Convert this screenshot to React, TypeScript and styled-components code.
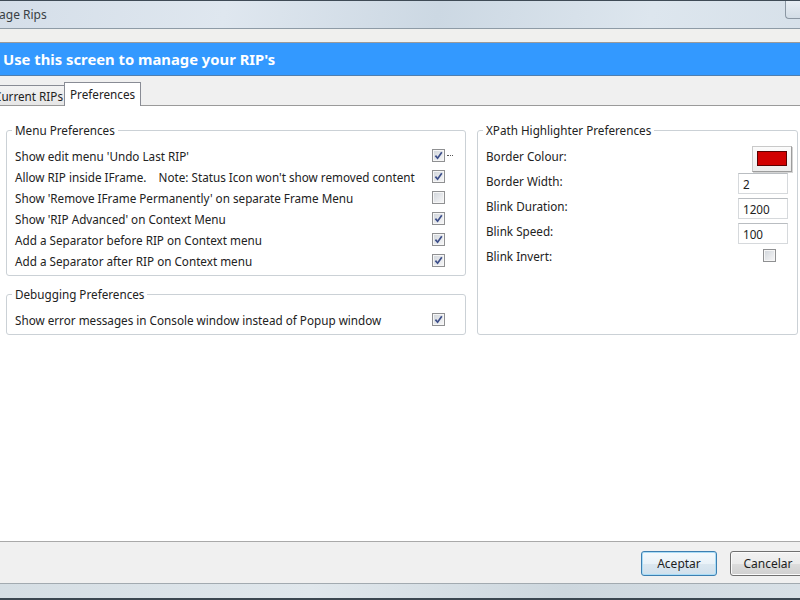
import React from 'react'
import styled, { createGlobalStyle, css } from 'styled-components'

const GlobalStyle = createGlobalStyle`
  * {
    box-sizing: border-box;
  }
  html, body {
    margin: 0;
    padding: 0;
    background: #f0f0f0;
  }
  body {
    font-family: 'Noto Sans', 'Open Sans', sans-serif;
    font-size: 11.7px;
    color: #222;
  }
`

const Screen = styled.div`
  width: 800px;
  height: 600px;
  overflow: hidden;
  background: #f0f0f0;
`

// the dialog is wider than the screenshot, it is cut on both sides
const Window = styled.div`
  margin-left: -30px;
  width: 850px;
  height: 600px;
  display: flex;
  flex-direction: column;
`

const TitleBar = styled.div`
  height: 29px;
  flex: none;
  display: flex;
  align-items: flex-start;
  border-top: 1px solid #3f4b56;
  border-bottom: 1px solid #8e9ba6;
  background: linear-gradient(100deg, #d3dde8 0%, #dfe7ef 30%, #ccd8e3 55%, #dde6ee 80%, #d6e0e9 100%);
`

const Title = styled.span`
  padding-left: 4px;
  line-height: 27px;
  font-size: 12px;
  color: #3a3f44;
`

const CloseButton = styled.div`
  margin-left: auto;
  width: 35px;
  height: 18px;
  border-left: 1px solid #8b97a3;
  border-bottom: 1px solid #8b97a3;
  border-bottom-left-radius: 4px;
  background: linear-gradient(#e8eef4, #d3dde6);
`

const MenuStrip = styled.div`
  height: 14px;
  flex: none;
  background: #f0f0ee;
  border-bottom: 1px solid #9a9a9a;
`

const Banner = styled.div`
  height: 33px;
  flex: none;
  display: flex;
  align-items: center;
  padding-left: 33px;
  background: #3399ff;
  border-bottom: 1px solid #4f7fb0;
  color: #ffffff;
  font-size: 14.8px;
  font-weight: 700;
`

const TabStrip = styled.div`
  height: 30px;
  flex: none;
  display: flex;
  align-items: flex-end;
  padding-left: 20px;
  border-bottom: 1px solid #9a9a9a;
`

const Tab = styled.div<{ active?: boolean }>`
  display: flex;
  align-items: center;
  border: 1px solid #898c95;
  border-bottom: none;
  font-size: 11.7px;
  ${({ active }) =>
    active
      ? css`
          height: 24px;
          margin-bottom: -1px;
          padding: 0 5px 2px 5px;
          background: #ffffff;
        `
      : css`
          height: 20px;
          padding: 0 1px 0 3px;
          border-right: none;
          background: linear-gradient(#f3f3f3, #e6e6e6);
        `}
`

const Panel = styled.div`
  flex: 1;
  background: #ffffff;
  padding: 16px 0 0 36px;
`

const Columns = styled.div`
  display: grid;
  grid-template-columns: 460px 321px;
  column-gap: 11px;
  align-items: stretch;
`

const Stack = styled.div`
  display: flex;
  flex-direction: column;
  gap: 10px;
`

const Group = styled.fieldset<{ padTop: number; padRight: number }>`
  margin: 0;
  min-width: 0;
  border: 1px solid #cbd1d6;
  border-radius: 3px;
  padding: ${({ padTop }) => padTop}px ${({ padRight }) => padRight}px 4px 8px;
`

const GroupTitle = styled.legend`
  padding: 0 3px;
  margin-left: -3px;
  line-height: 16px;
  font-size: 11.7px;
  color: #222;
`

const OptionRow = styled.div`
  height: 21px;
  display: flex;
  align-items: center;
  justify-content: space-between;
  white-space: nowrap;
`

const FieldRow = styled.div`
  height: 25px;
  display: flex;
  align-items: center;
  justify-content: space-between;
`

const Box = styled.span<{ focused?: boolean; right?: number }>`
  position: relative;
  flex: none;
  width: 13px;
  height: 13px;
  margin-right: ${({ right }) => right ?? 0}px;
  border: 1px solid #8f9092;
  background: linear-gradient(135deg, #cfd4da 0%, #e6e8eb 55%, #f7f7f8 100%);
  box-shadow: inset 0 0 0 1px #f6f6f6;
  display: flex;
  align-items: center;
  justify-content: center;
  ${({ focused }) =>
    focused &&
    css`
      &::after {
        content: '';
        position: absolute;
        left: 14px;
        top: 5px;
        width: 6px;
        border-top: 1px dotted #555;
      }
    `}
`

const Check = () => (
  <svg width="9" height="9" viewBox="0 0 9 9">
    <path d="M1.4 4.6 L3.6 7.2 L7.8 1.2" fill="none" stroke="#3d4f8a" strokeWidth="1.7" />
  </svg>
)

function CheckBox({ checked, focused, right }: { checked?: boolean; focused?: boolean; right?: number }) {
  return (
    <Box focused={focused} right={right}>
      {checked && <Check />}
    </Box>
  )
}

const NumberField = styled.input`
  width: 50px;
  height: 21px;
  margin: 6px 4px 0 0;
  padding: 0 4px;
  border: 1px solid #d6d9dc;
  border-top-color: #b9bdc1;
  background: #ffffff;
  font-family: inherit;
  font-size: 11.7px;
  color: #222;
  outline: none;
`

const ColourButton = styled.div`
  width: 40px;
  height: 26px;
  margin-top: 6px;
  display: flex;
  align-items: center;
  justify-content: center;
  border: 1px solid #c9c9c9;
  border-right-color: #9d9d9d;
  border-bottom-color: #9d9d9d;
  background: linear-gradient(#fbfbfb, #ececec);
  box-shadow: 1px 1px 0 #d4d4d4;
`

const Swatch = styled.span<{ colour: string }>`
  width: 30px;
  height: 15px;
  background: ${({ colour }) => colour};
  border: 1px solid #5a0000;
`

const Footer = styled.div`
  height: 42px;
  flex: none;
  display: flex;
  align-items: flex-start;
  justify-content: flex-end;
  gap: 13px;
  padding: 9px 14px 0 0;
  border-top: 1px solid #a9a9a9;
  background: #f0f0f0;
`

const DialogButton = styled.button<{ primary?: boolean }>`
  width: 76px;
  height: 25px;
  padding: 0;
  border-radius: 3px;
  font-family: inherit;
  font-size: 12px;
  color: #1e1e1e;
  ${({ primary }) =>
    primary
      ? css`
          border: 1px solid #3c7fb1;
          background: linear-gradient(#f4f9fc 0%, #e9f2f8 50%, #dbe7f0 51%, #d0e0ec 100%);
          box-shadow: inset 0 0 0 1px #a9dcf6;
        `
      : css`
          border: 1px solid #707070;
          background: linear-gradient(#f2f2f2 0%, #ebebeb 50%, #dddddd 51%, #cfcfcf 100%);
          box-shadow: inset 0 0 0 1px #fbfbfb;
        `}
`

const Frame = styled.div`
  height: 17px;
  flex: none;
  border-top: 1px solid #a2aab0;
  border-bottom: 2px solid #3b4751;
  background: linear-gradient(90deg, #d4dde3, #e0e7ec 40%, #cdd7de 70%, #d9e1e7);
`

const menuOptions = [
  { label: "Show edit menu 'Undo Last RIP'", checked: true, focused: true },
  { label: "Allow RIP inside IFrame.\u00a0\u00a0\u00a0\u00a0Note: Status Icon won't show removed content", checked: true },
  { label: "Show 'Remove IFrame Permanently' on separate Frame Menu", checked: false },
  { label: "Show 'RIP Advanced' on Context Menu", checked: true },
  { label: 'Add a Separator before RIP on Context menu', checked: true },
  { label: 'Add a Separator after RIP on Context menu', checked: true },
]

const numberFields = [
  { label: 'Border Width:', value: '2' },
  { label: 'Blink Duration:', value: '1200' },
  { label: 'Blink Speed:', value: '100' },
]

export default function App() {
  return (
    <Screen>
      <GlobalStyle />
      <Window>
        <TitleBar>
          <Title>Manage Rips</Title>
          <CloseButton />
        </TitleBar>
        <MenuStrip />
        <Banner>Use this screen to manage your RIP's</Banner>
        <TabStrip>
          <Tab>Current RIPs</Tab>
          <Tab active>Preferences</Tab>
        </TabStrip>
        <Panel>
          <Columns>
            <Stack>
              <Group padTop={7} padRight={20}>
                <GroupTitle>Menu Preferences</GroupTitle>
                {menuOptions.map(o => (
                  <OptionRow key={o.label}>
                    <span>{o.label}</span>
                    <CheckBox checked={o.checked} focused={o.focused} />
                  </OptionRow>
                ))}
              </Group>
              <Group padTop={7} padRight={20}>
                <GroupTitle>Debugging Preferences</GroupTitle>
                <OptionRow>
                  <span>Show error messages in Console window instead of Popup window</span>
                  <CheckBox checked />
                </OptionRow>
              </Group>
            </Stack>
            <Group padTop={5} padRight={5}>
              <GroupTitle>XPath Highlighter Preferences</GroupTitle>
              <FieldRow>
                <span>Border Colour:</span>
                <ColourButton>
                  <Swatch colour="#d10000" />
                </ColourButton>
              </FieldRow>
              {numberFields.map(f => (
                <FieldRow key={f.label}>
                  <span>{f.label}</span>
                  <NumberField defaultValue={f.value} />
                </FieldRow>
              ))}
              <FieldRow>
                <span>Blink Invert:</span>
                <CheckBox right={16} />
              </FieldRow>
            </Group>
          </Columns>
        </Panel>
        <Footer>
          <DialogButton primary>Aceptar</DialogButton>
          <DialogButton>Cancelar</DialogButton>
        </Footer>
        <Frame />
      </Window>
    </Screen>
  )
}
